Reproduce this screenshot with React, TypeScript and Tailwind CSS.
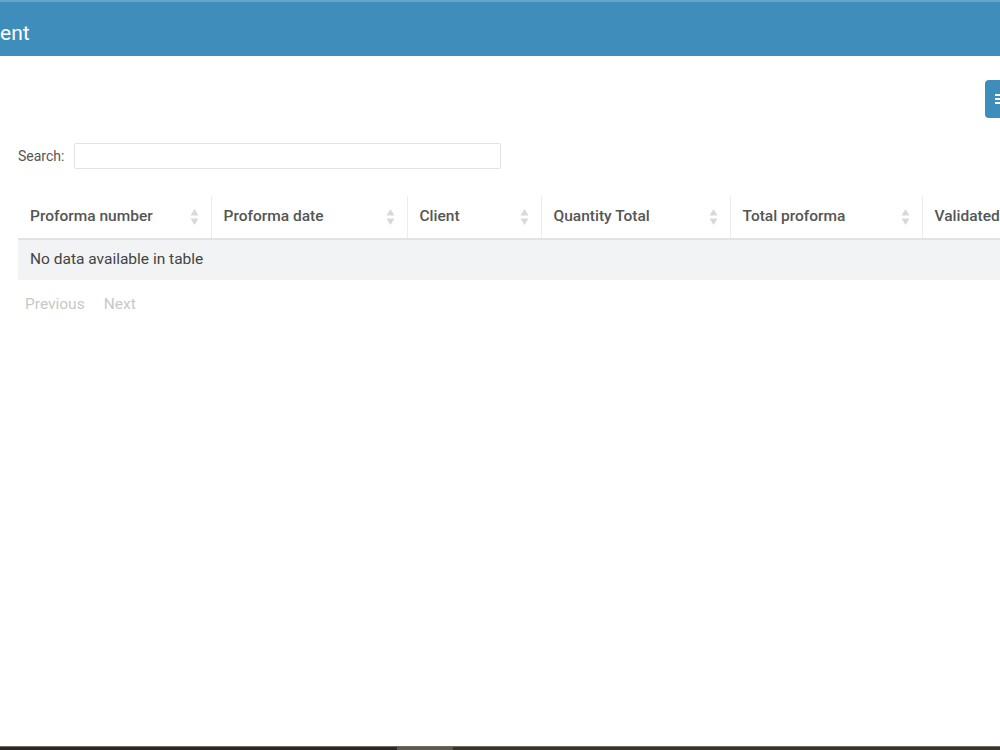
import React from "react";

const columns = [
  { label: "Proforma number", width: "w-[193px]" },
  { label: "Proforma date", width: "w-[196px]" },
  { label: "Client", width: "w-[134px]" },
  { label: "Quantity Total", width: "w-[189px]" },
  { label: "Total proforma", width: "w-[192px]" },
  { label: "Validated", width: "w-[160px]" },
];

function SortIcon() {
  return (
    <svg width="9" height="18" viewBox="0 0 9 18" className="shrink-0">
      <path d="M4.5 1 L8.5 7.5 L0.5 7.5 Z" fill="#d9d9d9" />
      <path d="M4.5 17 L8.5 10.5 L0.5 10.5 Z" fill="#d9d9d9" />
    </svg>
  );
}

export default function App() {
  return (
    <div
      className="flex min-h-[750px] w-[1000px] flex-col overflow-hidden bg-white text-[#444]"
      style={{ fontFamily: "Roboto, 'Liberation Sans', sans-serif" }}
    >
      <div className="h-[56px] shrink-0 border-t-2 border-[#66a6cc] bg-[#3f8dbb]">
        <div className="flex h-full items-center pt-[8px]">
          <span className="text-[21px] leading-none text-white">ent</span>
        </div>
      </div>

      <div className="flex-1 pl-[18px]">
        <div className="flex justify-end pt-[24px]">
          <button className="flex h-[38px] w-[40px] -mr-[25px] items-center rounded-[4px] bg-[#3f8dbb] pl-[10px]">
            <svg width="10" height="12" viewBox="0 0 10 12">
              <rect x="0" y="1" width="10" height="2" fill="#fff" />
              <rect x="0" y="5" width="10" height="2" fill="#fff" />
              <rect x="0" y="9" width="10" height="2" fill="#fff" />
            </svg>
          </button>
        </div>

        <div className="mt-[25px] flex items-center gap-[10px]">
          <label className="text-[14px] text-[#555]">Search:</label>
          <input
            type="text"
            className="h-[26px] w-[427px] rounded-[2px] border border-[#e3e3e3] bg-white outline-none"
          />
        </div>

        <table className="mt-[27px] w-[1064px] table-fixed border-collapse text-[15.5px]">
          <thead>
            <tr className="h-[43px] border-b-2 border-[#e2e2e2]">
              {columns.map((c, i) => (
                <th
                  key={c.label}
                  className={`${c.width} ${i > 0 ? "border-l border-[#ececec]" : ""} pl-[12px] pr-[12px] text-left font-medium text-[#555]`}
                >
                  <div className="flex items-center justify-between">
                    <span className="whitespace-nowrap">{c.label}</span>
                    <SortIcon />
                  </div>
                </th>
              ))}
            </tr>
          </thead>
          <tbody>
            <tr className="h-[41px] bg-[#f2f3f4]">
              <td colSpan={6} className="pl-[12px] text-[15.5px] text-[#444]">
                No data available in table
              </td>
            </tr>
          </tbody>
        </table>

        <div className="mt-[13px] flex gap-[19px] pl-[7px] text-[15.5px] text-[#c8c8c8]">
          <span>Previous</span>
          <span>Next</span>
        </div>
      </div>

      <div className="flex h-[4px] shrink-0 border-t border-[#6e6a64] bg-[#2b2723]">
        <div className="w-[397px]" />
        <div className="w-[56px] bg-[#5e5850]" />
        <div className="flex-1 bg-[#3a332b]" />
      </div>
    </div>
  );
}
